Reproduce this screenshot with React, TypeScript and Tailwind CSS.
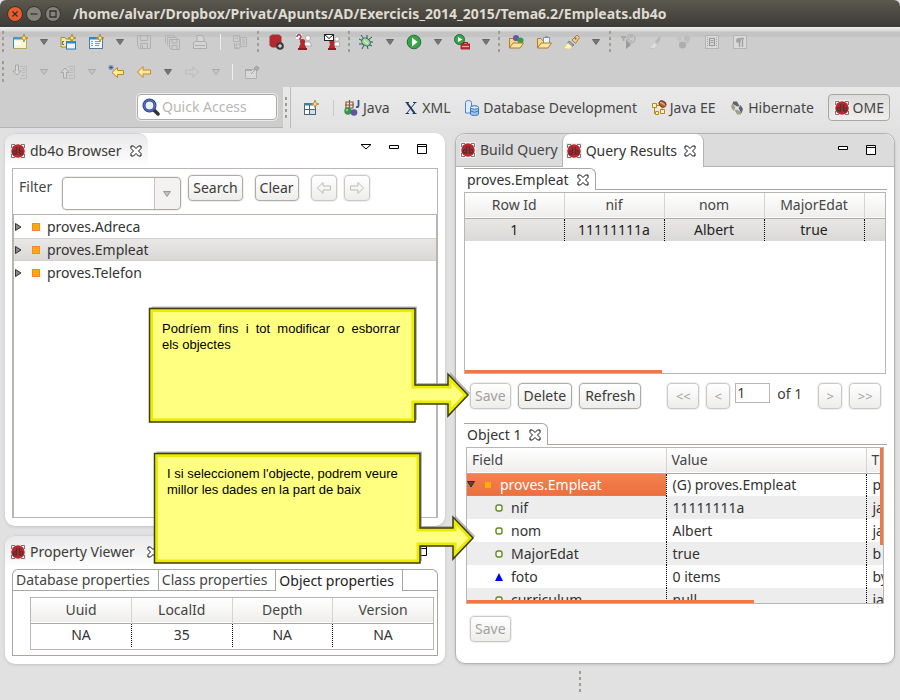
import React from 'react';
import clsx from 'clsx';

type Kids = { children?: React.ReactNode; className?: string };

/* ---------- icons ---------- */

const Svg = ({ children, className }: Kids) => (
  <svg viewBox="0 0 16 16" className={clsx('w-4 h-4 shrink-0', className)} fill="none" aria-hidden="true">
    {children}
  </svg>
);

const Db4oIcon = () => (
  <Svg>
    <rect x=".5" y=".5" width="15" height="15" fill="#fff" stroke="#eee" />
    <path d="M1.500 5V1.500H5M11 1.500h3.500V5M14.500 11v3.500H11M5 14.500H1.500V11" stroke="#777" />
    <circle cx="8" cy="8" r="6.800" fill="#b8282e" />
    <path d="M6.500 4v7.500M9.500 4v7.500" stroke="#553030" strokeWidth="1.400" />
    <circle cx="4.800" cy="9.300" r="1.700" stroke="#553030" strokeWidth="1.300" />
    <circle cx="11.200" cy="9.300" r="1.700" stroke="#553030" strokeWidth="1.300" />
  </Svg>
);

const CloseIcon = () => (
  <svg viewBox="0 0 12 12" className="w-3 h-3" fill="none" aria-hidden="true">
    <path d="M1 1h2.500L6 3.500 8.500 1H11v2.500L8.500 6 11 8.500V11H8.500L6 8.500 3.500 11H1V8.500L3.500 6 1 3.500z" fill="#fff" stroke="#111" />
  </svg>
);

const Spark = ({ x = 12, y = 4 }) => (
  <g transform={`translate(${x} ${y})`}>
    <path d="M0-4L1-1 4 0 1 1 0 4-1 1-4 0-1-1z" fill="#f7e08a" stroke="#a8841c" strokeWidth=".8" />
  </g>
);

const NewIcon = () => (
  <Svg>
    <rect x="1.500" y="3.500" width="13" height="11" fill="#f8f5d4" stroke="#b9a766" />
    <path d="M1.500 14V3.500H11" stroke="#3f86b8" />
    <path d="M1 3h10v2.500H1z" fill="#3f9ad0" />
    <path d="M3 7h6v4H3z" fill="#fff" />
    <Spark />
  </Svg>
);

const NewProjectIcon = () => (
  <Svg>
    <path d="M1 3.500h4l1 1.500h5v8H1z" fill="#fbe7a4" stroke="#b08a2c" />
    <path d="M4 7.500H2.500v3H4" stroke="#2d79a8" />
    <rect x="6.500" y="7.500" width="9" height="7.500" fill="#eef6fc" stroke="#2d79a8" />
    <path d="M6 7h10v2.500H6z" fill="#3189c4" />
    <Spark />
  </Svg>
);

const NewWizardIcon = () => (
  <Svg>
    <rect x="1.500" y="3.500" width="13" height="11" fill="#f7fafc" stroke="#54799b" />
    <path d="M1 3h10v2.500H1z" fill="#3189c4" />
    <path d="M3 7.500h2M3 9.500h2M3 11.500h2M7 7.500h5M7 9.500h5M7 11.500h4" stroke="#7d9bb8" />
    <Spark />
  </Svg>
);

const SaveIcon = () => (
  <Svg>
    <path d="M1.500 1.500h13v13h-11l-2-2zM4.500 1.500v5h7v-5M4.500 14.500v-5h7v5M6.500 11v3" stroke="#b0b0b0" />
  </Svg>
);

const SaveAllIcon = () => (
  <Svg>
    <path d="M1.500 9.500v-8h9v2M3.500 11.500v-8h9v2" stroke="#b4b4b4" />
    <path d="M5.500 5.500h10v10h-8l-2-2zM8 5.500v3.500h5V5.500M8 15v-3.500h5V15" stroke="#b0b0b0" />
  </Svg>
);

const PrintIcon = () => (
  <Svg>
    <path d="M5 8V1.500h5L12 4v4M1.500 8.500l2-1h9l2 1v6h-13zM3 11.500h10" fill="#d4d4d4" stroke="#adadad" />
  </Svg>
);

const CompareIcon = () => (
  <Svg>
    <path d="M1.500 1.500h6v6h-6zM8.500 3.500h6v9h-6zM2.500 9v5.500H7M3 4h3M10 6h3M10 8h3M10 10h3M4 10h4v4H4z" stroke="#b3b3b3" />
  </Svg>
);

const StopAddIcon = () => (
  <Svg>
    <path d="M4 .5h7l2.500 2v9l-2.500 2H4l-2.500-2v-9z" fill="#b02a30" />
    <circle cx="12" cy="12" r="3.800" fill="#3a3a3a" />
    <path d="M10 12h4M12 10v4" stroke="#fff" />
  </Svg>
);

const ConnectIcon = () => (
  <Svg>
    <circle cx="12" cy="4" r="2.500" fill="#fff" stroke="#999" strokeWidth=".7" />
    <path d="M8 12l1-4h5l1.500 4z" fill="#fff" stroke="#999" strokeWidth=".7" />
    <path d="M0 0h6v5H0z" fill="#fff" />
    <path d="M1 3a2 2 0 1 1 3 1.500V6" stroke="#b8325c" strokeWidth="1.500" />
    <circle cx="6.500" cy="7.500" r="2.600" fill="#b3282d" />
    <path d="M5 9h3l2 4v2H3v-2z" fill="#b3282d" />
    <path d="M2 15h9" stroke="#8c1c20" strokeWidth="2" />
  </Svg>
);

const MailUserIcon = () => (
  <Svg>
    <circle cx="13" cy="5" r="2.200" fill="#fff" stroke="#999" strokeWidth=".7" />
    <path d="M10 12l1-4h4l1 4z" fill="#fff" stroke="#999" strokeWidth=".7" />
    <circle cx="8" cy="8" r="2.600" fill="#b3282d" />
    <path d="M6.500 9h3l1.500 4v2H5v-2z" fill="#b3282d" />
    <path d="M4 15h8" stroke="#8c1c20" strokeWidth="2" />
    <rect x=".5" y=".5" width="9" height="6" fill="#fff" stroke="#222" />
    <path d="M1 1l4 3.500L9 1" stroke="#222" />
  </Svg>
);

const BugIcon = () => (
  <Svg>
    <path d="M3 1l3 4M1 5l4 2M1 10h4M4 15l2-4M9 1v4M14 3l-4 3M15 8h-4M14 12l-4-2M10 15l-1-4" stroke="#28565c" />
    <ellipse cx="8" cy="8" rx="4.600" ry="3.600" transform="rotate(35 8 8)" fill="#a5d7a0" stroke="#2a6b5f" />
    <path d="M6 6.500l4 3.500" stroke="#e6f7d0" />
  </Svg>
);

const RunIcon = () => (
  <Svg>
    <circle cx="8" cy="8" r="6.800" fill="#3aa34a" stroke="#1e7433" />
    <path d="M6 3.500l5.500 4.500L6 12.500z" fill="#fff" />
  </Svg>
);

const RunExternalIcon = () => (
  <Svg>
    <circle cx="5.500" cy="5.500" r="5" fill="#3aa34a" stroke="#1e7433" />
    <path d="M4 3l4.500 2.500L4 8z" fill="#fff" />
    <path d="M7 10h9v5H7z" fill="#cf2f35" stroke="#8e1b20" strokeWidth=".8" />
    <path d="M9.500 10V8.500h4V10" stroke="#8e1b20" />
    <path d="M8 12.500h7" stroke="#f3a5a5" />
  </Svg>
);

const FolderIcon = ({ children }: Kids) => (
  <Svg>
    <path d="M1.500 14V4.500H5l1.500 2h7V9" fill="#f5d88c" stroke="#b07f25" />
    {children}
    <path d="M1.500 14L5 9h10.500L12 14z" fill="#fbe5a5" stroke="#b07f25" />
  </Svg>
);

const OpenTypeIcon = () => (
  <FolderIcon>
    <circle cx="8" cy="4" r="3" fill="#6757a8" />
    <circle cx="12.500" cy="6.500" r="3" fill="#3a9a50" />
  </FolderIcon>
);

const OpenTaskIcon = () => (
  <FolderIcon>
    <path d="M7.500 3.500h6v6h-6zM9.500 3.500v-1h2v1" fill="#eef4fa" stroke="#7a93b0" />
  </FolderIcon>
);

const TorchIcon = () => (
  <Svg>
    <path d="M8 6l5-5 2.500 2.500-4 6z" fill="#f3c882" stroke="#b0813a" />
    <path d="M5 7l5 4-2 1.500L3.500 9z" fill="#9aa0b5" stroke="#6a6f85" strokeWidth=".7" />
    <path d="M4 9l4 3.500L6 15l-6-.500L2 11z" fill="#fff6b8" stroke="#dcc668" strokeWidth=".5" />
    <circle cx="11.500" cy="4.500" r="1" fill="#4a6fa5" />
  </Svg>
);

const FadedClassIcon = () => (
  <Svg>
    <path d="M1 3h5M3.500 3v4" stroke="#aaa" strokeWidth="2" />
    <circle cx="11" cy="5" r="4" stroke="#b0b0b0" strokeWidth="1.400" />
    <path d="M12.500 3.800a2 2 0 1 0 0 2.500" stroke="#aaa" />
    <path d="M6 6l5 5-5 4z" fill="#999" />
  </Svg>
);

const FadedBrushIcon = () => (
  <Svg>
    <path d="M1 14l5-6 4 3-4 4z" fill="#dcdcdc" stroke="#bbb" strokeWidth=".7" />
    <path d="M7 7l6-6-1 6-3 3z" fill="#b9b9b9" />
  </Svg>
);

const FadedBallsIcon = () => (
  <Svg>
    <circle cx="3.500" cy="4.500" r="2.500" fill="#c3c3c3" />
    <circle cx="11" cy="4.500" r="3" fill="#bcbcbc" />
    <circle cx="6.500" cy="11" r="3.600" fill="#aeaeae" />
    <path d="M9 9h3V6" stroke="#bbb" />
  </Svg>
);

const FadedBlockIcon = () => (
  <Svg>
    <rect x="1.500" y="1.500" width="13" height="13" fill="#d8d8d8" stroke="#b5b5b5" />
    <rect x="5.500" y="4.500" width="5" height="7" stroke="#999" />
    <path d="M3.500 3v10M12.500 3v10" stroke="#aaa" strokeDasharray="1 1" />
    <path d="M6.500 6.500h3M6.500 8.500h3" stroke="#999" />
  </Svg>
);

const FadedPilcrowIcon = () => (
  <Svg>
    <rect x="1.500" y="1.500" width="13" height="13" fill="#dadada" stroke="#b5b5b5" />
    <path d="M8 4.500h4M7.500 4v9M10.500 4v9" stroke="#a5a5a5" strokeWidth="1.500" />
    <circle cx="6.500" cy="6.500" r="2.500" fill="#a5a5a5" />
  </Svg>
);

const StepIcon = ({ up = false }) => (
  <Svg>
    <path d="M8 2.500h6.500v12H8M10 4.500h3M10 6.500h3M10 8.500h3M9 11.500h4" stroke="#bbb" />
    {up
      ? <path d="M5 4L1 8.500h2.500V14h3V8.500H9z" fill="#d6d6d6" stroke="#a8a8a8" />
      : <path d="M5 11L1 7h2.500V1h3v6H9z" fill="#d6d6d6" stroke="#a8a8a8" />}
  </Svg>
);

const ArrowIcon = ({ right = false, faded = false, star = false }) => (
  <Svg>
    <g transform={right ? 'translate(16 0) scale(-1 1)' : undefined}>
      <path
        d={star ? 'M4 8.500L9.500 3.500v3h6v4h-6v3z' : 'M1.500 8l5.500-5.500v3.500h7.500v4H7v3.500z'}
        fill={faded ? 'transparent' : '#ffe9a0'}
        stroke={faded ? '#bdbbb9' : '#c08a1e'}
      />
    </g>
    {star && <path d="M3 1v5M.5 3.500h5M1 1.500l4 4M5 1.500l-4 4" stroke="#24508c" strokeWidth=".8" />}
  </Svg>
);

const PinIcon = () => (
  <Svg>
    <path d="M1.500 5.500h11v9h-11z" fill="#d8d8d8" stroke="#b0b0b0" />
    <path d="M1 5h7v2H1z" fill="#aaa" />
    <path d="M7 10l4-4M10 4l3 3 2-3-2-2z" fill="#aaa" stroke="#a2a2a2" />
  </Svg>
);

const SearchIcon = () => (
  <svg viewBox="0 0 18 18" className="w-[18px] h-[18px] shrink-0" fill="none" aria-hidden="true">
    <path d="M12 12l4 4" stroke="#333" strokeWidth="3.500" strokeLinecap="round" />
    <circle cx="7.500" cy="7.500" r="5.500" fill="#e9eef8" stroke="#24418f" strokeWidth="3" />
    <circle cx="7.500" cy="7.500" r="5.500" stroke="#6f86c8" strokeWidth="1" />
  </svg>
);

const OpenPerspectiveIcon = () => (
  <Svg>
    <rect x="1.500" y="3.500" width="11" height="11" fill="#fff" stroke="#4d6272" />
    <path d="M1 3h9v2.500H1z" fill="#3b7fae" />
    <path d="M6.500 5v9.500M2 9.500h10" stroke="#4d6272" />
    <path d="M7 10h5v4H7z" fill="#cfe0ea" />
    <Spark />
  </Svg>
);

const JavaIcon = () => (
  <Svg>
    <path d="M2 2h7v6H2zM5.500 0v8M1 5h9" stroke="#8b5a3c" strokeWidth="1.200" />
    <path d="M14.500 0v5.500q0 2-2.500 1.500" stroke="#2a5b94" strokeWidth="1.800" />
    <circle cx="4" cy="11" r="3.700" fill="#36954b" />
    <circle cx="10" cy="12.500" r="3.300" fill="#6153a3" />
    <circle cx="3" cy="10" r="1.200" fill="#86cd8f" />
  </Svg>
);

const XmlIcon = () => (
  <Svg>
    <path d="M4 3l7.500 10" stroke="#1d3a66" strokeWidth="2" />
    <path d="M12 3L4 13M2.500 2.500H6M10 2.500h3.500M2.500 13.500H6M9.500 13.500h4" stroke="#1d3a66" />
  </Svg>
);

const DatabaseIcon = () => (
  <Svg>
    <path d="M1.500 2.500q0-2 3-2t3 2V13h-6z" fill="#dcecf9" stroke="#4a88c4" />
    <path d="M6.500 7.500q0-1.500 4-1.500t4 1.500V14q0 1.500-4 1.500T6.500 14z" fill="#9cc6ee" stroke="#3a78b8" />
    <ellipse cx="10.500" cy="7.500" rx="4" ry="1.700" fill="#e2f0fb" stroke="#3a78b8" />
    <path d="M6.500 11q4 2.500 8 0" stroke="#3a78b8" />
  </Svg>
);

const JavaEeIcon = () => (
  <Svg>
    <path d="M1.500 3.500h4v4h-4zM3.500 7.500v6H5M5.500 5.500H11v4M9.500 9.500h4v4h-4zM4.500 11.500h3v3h-3z" fill="#fff3bf" stroke="#b98a14" />
    <ellipse cx="11.500" cy="4" rx="3.600" ry="2.800" transform="rotate(35 11.500 4)" fill="#b9612f" stroke="#6b2f12" />
    <path d="M9 2.500q3 0 5 3" stroke="#f5d3b5" />
  </Svg>
);

const HibernateIcon = () => (
  <Svg>
    <path d="M4 1.500h4L10.500 6 8 6.500 4 4z" fill="#59666b" />
    <path d="M3.500 2.500L6.500 8l-2 3L2 7z" fill="#a39f87" />
    <path d="M12 14.500H8L5.500 10 8 9.500l4 2.500z" fill="#a39f87" />
    <path d="M12.500 13.500L9.500 8l2-3L14 9z" fill="#59666b" />
  </Svg>
);

/* ---------- small widgets ---------- */

const Tool = ({ label, children, disabled }: Kids & { label: string; disabled?: boolean }) => (
  <button type="button" aria-label={label} disabled={disabled} className="w-7 h-6 flex items-center justify-center shrink-0">
    {children}
  </button>
);

const Drop = ({ faded = false }) => (
  <button type="button" aria-label="More" disabled={faded} className="w-5 h-6 flex items-center justify-center shrink-0">
    <svg viewBox="0 0 8 6" className="w-2 h-1.5" aria-hidden="true">
      <path d="M.5.5h7L4 5.500z" fill={faded ? '#c6c6c6' : '#777'} stroke={faded ? '#aaa' : '#666'} />
    </svg>
  </button>
);

const Grip = ({ className = 'w-1.5' }: Kids) => (
  <span className={clsx('flex justify-center shrink-0', className)}>
    <span className="h-[22px] w-0.5 bg-[repeating-linear-gradient(to_bottom,#a09c90_0px,#a09c90_3px,transparent_3px,transparent_6px)]" />
  </span>
);

const Separator = () => (
  <span className="w-3 flex justify-center shrink-0">
    <span className="w-px h-4 bg-[#efefef]" />
  </span>
);

const Btn = ({ children, className, disabled, label }: Kids & { disabled?: boolean; label?: string }) => (
  <button
    type="button"
    aria-label={label}
    disabled={disabled}
    className={clsx(
      'h-[26px] flex items-center justify-center shrink-0 rounded border bg-linear-to-b from-white to-[#ededec] shadow-[0_0_0_1px_#f0efee]',
      disabled ? 'border-[#cbc8c5] text-[#a3a19e]' : 'border-[#aeaaa6] text-[#3c3b37]',
      className
    )}
  >
    {children}
  </button>
);

const WindowControls = ({ menu = false }) => (
  <div className="ml-auto flex items-start gap-[18px] pr-[18px] pt-[11px]">
    {menu && (
      <button type="button" aria-label="View menu">
        <svg viewBox="0 0 10 10" className="w-2.5 h-2.5" fill="#fff" stroke="#000" aria-hidden="true"><path d="M0 .5h10L5 5z" /></svg>
      </button>
    )}
    <button type="button" aria-label="Minimize">
      <svg viewBox="0 0 10 10" className="w-2.5 h-2.5" fill="#fff" stroke="#000" aria-hidden="true"><path d="M.5 1.500h9v3h-9z" /></svg>
    </button>
    <button type="button" aria-label="Maximize">
      <svg viewBox="0 0 10 10" className="w-2.5 h-2.5" fill="#fff" stroke="#000" aria-hidden="true"><path d="M.5.5h9v9h-9zM0 2.500h10" /></svg>
    </button>
  </div>
);

const Perspective = ({ icon, children }: Kids & { icon: React.ReactNode }) => (
  <button type="button" className="flex items-center gap-[3px] whitespace-nowrap">
    {icon}
    {children}
  </button>
);

const Close = () => (
  <button type="button" aria-label="Close" className="flex"><CloseIcon /></button>
);

const TitleDot = ({ label, className, children }: Kids & { label: string }) => (
  <button type="button" aria-label={label} className={clsx('w-4 h-4 rounded-full border border-[#33322e] flex items-center justify-center', className)}>
    <svg viewBox="0 0 10 10" className="w-2.5 h-2.5" fill="none" stroke="#33322e" strokeWidth="1.300" aria-hidden="true">{children}</svg>
  </button>
);

/* ---------- toolbars ---------- */

const TitleBar = () => (
  <header className="h-[27px] flex items-center pl-[7px] rounded-t-md bg-linear-to-b from-[#5b584e] to-[#3d3b36] text-[#dfdbd2]">
    <div className="flex gap-[3px]">
      <TitleDot label="Close window" className="bg-[#ea5b2e]"><path d="M2.500 2.500l5 5M7.500 2.500l-5 5" /></TitleDot>
      <TitleDot label="Minimize window" className="bg-[#85827a]"><path d="M1.500 5h7" /></TitleDot>
      <TitleDot label="Maximize window" className="bg-[#85827a]"><path d="M2 2h6v6H2z" /></TitleDot>
    </div>
    <h1 className="ml-3 text-[14px] font-bold whitespace-nowrap">
      /home/alvar/Dropbox/Privat/Apunts/AD/Exercicis_2014_2015/Tema6.2/Empleats.db4o
    </h1>
  </header>
);

const Toolbars = () => (
  <div className="bg-[linear-gradient(to_bottom,#f0f0f0_0px,#d8d8d8_4px,#c4c4c4_5px,#c4c4c4_10px,#cdcdcd_10px)]">
    <div className="h-[30px] flex items-center">
      <Grip />
      <Tool label="New"><NewIcon /></Tool>
      <Drop />
      <Tool label="New project"><NewProjectIcon /></Tool>
      <Tool label="New wizard"><NewWizardIcon /></Tool>
      <Drop />
      <Tool label="Save" disabled><SaveIcon /></Tool>
      <Tool label="Save all" disabled><SaveAllIcon /></Tool>
      <Tool label="Print" disabled><PrintIcon /></Tool>
      <Separator />
      <Tool label="Compare" disabled><CompareIcon /></Tool>
      <Grip className="w-2" />
      <Tool label="Add database"><StopAddIcon /></Tool>
      <Tool label="Connect"><ConnectIcon /></Tool>
      <Tool label="Contact"><MailUserIcon /></Tool>
      <Grip />
      <Tool label="Debug"><BugIcon /></Tool>
      <Drop />
      <Tool label="Run"><RunIcon /></Tool>
      <Drop />
      <Tool label="External tools"><RunExternalIcon /></Tool>
      <Drop />
      <Grip />
      <Tool label="Open type"><OpenTypeIcon /></Tool>
      <Tool label="Open task"><OpenTaskIcon /></Tool>
      <Tool label="Search"><TorchIcon /></Tool>
      <Drop />
      <Grip className="w-2" />
      <Tool label="Run class" disabled><FadedClassIcon /></Tool>
      <Tool label="Highlight" disabled><FadedBrushIcon /></Tool>
      <Tool label="Group" disabled><FadedBallsIcon /></Tool>
      <Tool label="Block selection" disabled><FadedBlockIcon /></Tool>
      <Tool label="Show whitespace" disabled><FadedPilcrowIcon /></Tool>
    </div>
    <div className="h-[30px] flex items-center">
      <Grip />
      <Tool label="Next annotation" disabled><StepIcon /></Tool>
      <Drop faded />
      <Tool label="Previous annotation" disabled><StepIcon up /></Tool>
      <Drop faded />
      <Tool label="Last edit"><ArrowIcon star /></Tool>
      <Tool label="Back"><ArrowIcon /></Tool>
      <Drop />
      <Tool label="Forward" disabled><ArrowIcon right faded /></Tool>
      <Drop faded />
      <Separator />
      <Tool label="Pin" disabled><PinIcon /></Tool>
    </div>
  </div>
);

const PerspectiveBar = () => (
  <div className="h-[41px] flex bg-linear-to-b from-[#e9e9e9] to-[#e2e2e2]">
    <div className="w-[283px] shrink-0 bg-[#cdcdcd] border-b border-[#b4b4b4] flex items-center justify-end pr-1.5">
      <label className="w-[140px] h-[26px] flex items-center gap-0.5 pl-1 rounded border border-[#aeaaa6] bg-white shadow-[0_0_0_1px_#ebebeb]">
        <SearchIcon />
        <input type="text" aria-label="Quick Access" placeholder="Quick Access" className="w-full min-w-0 bg-transparent outline-none placeholder:text-[#b9b7b4]" />
      </label>
    </div>
    <div className="flex items-center border-r border-[#bbb] pr-px">
      <Grip />
    </div>
    <nav className="grow flex items-center pl-3 pr-2.5 text-[#454545]">
      <button type="button" aria-label="Open perspective"><OpenPerspectiveIcon /></button>
      <span className="w-px h-4 bg-[#c9c9c9] ml-3.5 mr-2.5" />
      <div className="grow flex items-center justify-between">
        <Perspective icon={<JavaIcon />}>Java</Perspective>
        <Perspective icon={<XmlIcon />}>XML</Perspective>
        <Perspective icon={<DatabaseIcon />}>Database Development</Perspective>
        <Perspective icon={<JavaEeIcon />}>Java EE</Perspective>
        <Perspective icon={<HibernateIcon />}>Hibernate</Perspective>
        <button type="button" className="h-[27px] px-[5px] flex items-center gap-[3px] rounded border border-[#aaa6a2] bg-linear-to-b from-[#dedddc] to-[#efeeed]">
          <Db4oIcon />
          OME
        </button>
      </div>
    </nav>
  </div>
);

/* ---------- left column ---------- */

const classes = ['proves.Adreca', 'proves.Empleat', 'proves.Telefon'];

const BrowserPanel = () => (
  <section className="grow flex flex-col rounded-[10px] bg-white shadow-[0_1px_3px_#c4c4c4]">
    <div className="h-[34px] flex">
      <h2 className="flex items-center gap-1 pl-[5px] pr-1.5 rounded-t-[10px] border-t border-[#d3d3dc] bg-linear-to-b from-[#e9e9e9] to-white">
        <Db4oIcon />
        db4o Browser
        <span className="ml-1"><Close /></span>
      </h2>
      <WindowControls menu />
    </div>
    <div className="grow flex flex-col mx-[7px] mt-px mb-2 border border-[#b9b5b0]">
      <div className="flex items-start gap-3 px-1.5 pt-[6px] pb-1">
        <label htmlFor="filter" className="pt-0.5 text-[#454545]">Filter</label>
        <div className="relative flex mt-0.5 -ml-0.5 mr-[-5px]">
          <select id="filter" className="w-[119px] h-[33px] appearance-none rounded border border-[#aeaaa6] bg-[linear-gradient(to_right,#fff_91px,#c6c3c0_91px,#c6c3c0_92px,#f3f2f1_92px)] shadow-[0_0_0_1px_#f0efee]" />
          <svg viewBox="0 0 8 6" className="absolute right-2.5 top-3.5 w-2 h-1.5 pointer-events-none" aria-hidden="true">
            <path d="M.5.5h7L4 5.500z" fill="#c0c0c0" stroke="#999" />
          </svg>
        </div>
        <Btn className="px-1">Search</Btn>
        <Btn className="px-1">Clear</Btn>
        <div className="flex gap-[7px]">
          <Btn disabled label="Previous" className="w-[26px]"><ArrowIcon faded /></Btn>
          <Btn disabled label="Next" className="w-[26px]"><ArrowIcon right faded /></Btn>
        </div>
      </div>
      <ul className="grow border-t border-l border-r border-[#b9b5b0] text-[#333]">
        {classes.map((name, i) => (
          <li
            key={name}
            className={clsx(
              'h-[23px] flex items-center pl-px border-y',
              i === 1 ? 'bg-linear-to-b from-[#e9e8e7] to-[#dbd9d7] border-[#d3d0ce]' : 'border-transparent'
            )}
          >
            <svg viewBox="0 0 7 8" className="w-[7px] h-2" aria-hidden="true"><path d="M.5.5L6 4 .5 7.500z" fill="#888" stroke="#333" /></svg>
            <span className="w-2 h-2 ml-2.5 mr-[7px] bg-[#ffab00] border border-[#ff7f3f]" />
            {name}
          </li>
        ))}
      </ul>
    </div>
  </section>
);

const properties = [
  { name: 'Uuid', value: 'NA' },
  { name: 'LocalId', value: '35' },
  { name: 'Depth', value: 'NA' },
  { name: 'Version', value: 'NA' },
];

const PropertyPanel = () => (
  <section className="rounded-[10px] bg-white shadow-[0_1px_3px_#c4c4c4]">
    <div className="h-[33px] flex">
      <h2 className="flex items-center gap-1 pl-[5px] pr-1.5 rounded-t-[10px] border-t border-[#d3d3dc] bg-linear-to-b from-[#e9e9e9] to-white">
        <Db4oIcon />
        Property Viewer
        <span className="ml-2"><Close /></span>
      </h2>
      <WindowControls menu />
    </div>
    <div className="mx-[7px] mt-px pb-2">
      <div className="flex border border-b-0 border-[#a9a6a2] rounded-t-md whitespace-nowrap">
        <button type="button" className="h-[21px] pl-[3px] pr-2 border-b border-r border-[#a9a6a2] text-[#454545]">Database properties</button>
        <button type="button" className="h-[21px] pl-[3px] pr-2 border-b border-r border-[#a9a6a2] text-[#454545]">Class properties</button>
        <button type="button" className="h-[21px] pl-[3px] pr-2 border-r border-[#a9a6a2] text-[#222]">Object properties</button>
        <span className="grow border-b border-[#a9a6a2]" />
      </div>
      <div className="border border-t-0 border-[#a9a6a2] pt-1.5 pl-[17px] pr-[3px] pb-[5px]">
        <div className="border border-[#b9b5b0] pb-0.5">
          <table className="w-full table-fixed border-collapse text-center">
            <thead>
              <tr className="h-[25px] bg-linear-to-b from-white to-[#efeeed] border-b border-[#aeaaa6]">
                {properties.map((p) => (
                  <th key={p.name} className="p-0 font-normal text-[#454545] border-l border-[#d6d3d0] first:border-l-0">{p.name}</th>
                ))}
              </tr>
            </thead>
            <tbody>
              <tr className="h-6">
                {properties.map((p) => (
                  <td key={p.name} className="p-0 text-[#333] border-l border-dotted border-black first:border-l-0">{p.value}</td>
                ))}
              </tr>
            </tbody>
          </table>
        </div>
      </div>
    </div>
  </section>
);

/* ---------- right column ---------- */

const InnerTab = ({ children }: Kids) => (
  <div className="h-[22px] flex">
    <h3 className="flex items-center gap-2 pl-[3px] pr-1.5 border-t border-r border-[#a9a6a2] rounded-tr-md text-[#333]">
      {children}
      <Close />
    </h3>
    <span className="grow border-b border-[#a9a6a2]" />
  </div>
);

const resultColumns = ['Row Id', 'nif', 'nom', 'MajorEdat', ''];
const resultRow = ['1', '11111111a', 'Albert', 'true', ''];

const ResultsTable = () => (
  <div className="relative h-[182px] mt-0.5 mr-2 ml-px border border-[#b9b5b0] overflow-hidden">
    <table className="w-full table-fixed border-collapse text-center">
      <colgroup>
        <col className="w-[99px]" />
        <col className="w-[100px]" />
        <col className="w-[100px]" />
        <col className="w-[100px]" />
        <col />
      </colgroup>
      <thead>
        <tr className="h-[25px] bg-linear-to-b from-white to-[#efeeed] border-b border-[#aeaaa6]">
          {resultColumns.map((c) => (
            <th key={c} className="p-0 font-normal text-[#454545] border-l border-[#d6d3d0] first:border-l-0">{c}</th>
          ))}
        </tr>
      </thead>
      <tbody>
        <tr className="h-[23px] bg-linear-to-b from-[#e9e8e7] to-[#dbd9d7]">
          {resultRow.map((v, i) => (
            <td key={i} className="p-0 text-[#222] border-l border-dotted border-black first:border-l-0">{v}</td>
          ))}
        </tr>
      </tbody>
    </table>
    <span className="absolute left-0 bottom-0 h-[3px] w-[47%] bg-[#f07746]" />
  </div>
);

const fields = [
  { name: 'nif', value: '11111111a', type: 'ja' },
  { name: 'nom', value: 'Albert', type: 'ja' },
  { name: 'MajorEdat', value: 'true', type: 'b' },
  { name: 'foto', value: '0 items', type: 'by', array: true },
  { name: 'curriculum', value: 'null', type: 'ja' },
];

const ObjectTable = () => (
  <div className="relative h-[157px] mt-0.5 mr-2.5 ml-[3px] border border-[#b9b5b0] overflow-hidden">
    <table className="w-full table-fixed border-collapse text-left">
      <colgroup>
        <col className="w-[199px]" />
        <col className="w-[200px]" />
        <col />
      </colgroup>
      <thead>
        <tr className="h-[25px] bg-linear-to-b from-white to-[#efeeed] border-b border-[#aeaaa6]">
          <th className="py-0 pl-[5px] font-normal text-[#454545]">Field</th>
          <th className="py-0 pl-[5px] font-normal text-[#454545] border-l border-[#d6d3d0]">Value</th>
          <th className="py-0 pl-[5px] font-normal text-[#454545] border-l border-[#d6d3d0]">T</th>
        </tr>
      </thead>
      <tbody className="text-[#333]">
        <tr className="h-[23px]">
          <td className="p-0 bg-linear-to-b from-[#f4814f] to-[#eb6f3e] text-white">
            <span className="flex items-center">
              <svg viewBox="0 0 8 7" className="w-2 h-[7px]" aria-hidden="true"><path d="M.5.5h7L4 6z" fill="#6b3d28" stroke="#333" /></svg>
              <span className="w-1.5 h-1.5 ml-2.5 mr-[9px] bg-[#ffab00]" />
              proves.Empleat
            </span>
          </td>
          <td className="py-0 pl-1.5 border-l border-dotted border-black">(G) proves.Empleat</td>
          <td className="py-0 pl-1.5 border-l border-dotted border-black">p</td>
        </tr>
        {fields.map((f) => (
          <tr key={f.name} className="h-[23px] odd:bg-white even:bg-[#ededed]">
            <td className="p-0">
              <span className="flex items-center gap-2 pl-7">
                {f.array
                  ? <svg viewBox="0 0 8 8" className="w-2 h-2" aria-hidden="true"><path d="M4 0l4 8H0z" fill="#0000f5" /></svg>
                  : <svg viewBox="0 0 8 8" className="w-2 h-2" aria-hidden="true"><rect x="1" y="1" width="6" height="6" rx="2" fill="#fff" stroke="#5e8a1e" strokeWidth="1.400" /></svg>}
                {f.name}
              </span>
            </td>
            <td className="py-0 pl-1.5 border-l border-dotted border-black">{f.value}</td>
            <td className="py-0 pl-1.5 border-l border-dotted border-black">{f.type}</td>
          </tr>
        ))}
      </tbody>
    </table>
    <span className="absolute left-0 bottom-0 h-[3px] w-[69%] bg-[#f07746]" />
    <span className="absolute right-0 top-0 w-[3px] h-[97px] bg-[#f07746]" />
  </div>
);

const QueryPanel = () => (
  <section className="rounded-[10px] bg-white border border-[#b4b4b4] shadow-[0_1px_3px_#c4c4c4]">
    <div className="h-[33px] flex rounded-t-[10px] bg-[#dcdcdc]">
      <h2 className="flex items-center gap-1 pl-1 pr-1 text-[#454545] border-b border-[#b4b4b4]">
        <Db4oIcon />
        Build Query
      </h2>
      <h2 className="flex items-center gap-1 pl-[3px] pr-[7px] bg-white text-[#333] border-x border-[#b4b4b4] rounded-t-lg">
        <Db4oIcon />
        Query Results
        <span className="ml-[3px]"><Close /></span>
      </h2>
      <div className="grow flex border-b border-[#b4b4b4] rounded-tr-[10px]">
        <WindowControls />
      </div>
    </div>
    <div className="pl-2 pr-[7px] pt-px">
      <InnerTab>proves.Empleat</InnerTab>
    </div>
    <div className="pl-[7px]">
      <ResultsTable />
    </div>
    <div className="flex items-start pl-3.5 pt-[9px] gap-[7px]">
      <Btn disabled className="px-1">Save</Btn>
      <Btn className="px-[5px]">Delete</Btn>
      <Btn className="px-[5px]">Refresh</Btn>
      <Btn disabled className="w-8 ml-[19px] text-[13px]">&lt;&lt;</Btn>
      <Btn disabled className="w-6 text-[13px]">&lt;</Btn>
      <input type="text" aria-label="Page" defaultValue="1" className="w-[35px] h-5 -ml-0.5 pl-px border border-[#b9b5b0] outline-none" />
      <span className="mt-px">of 1</span>
      <Btn disabled className="w-6 ml-[9px] text-[13px]">&gt;</Btn>
      <Btn disabled className="w-8 text-[13px]">&gt;&gt;</Btn>
    </div>
    <div className="pl-2 pr-[7px] pt-3.5">
      <InnerTab>Object 1</InnerTab>
    </div>
    <div className="pl-[7px]">
      <ObjectTable />
    </div>
    <div className="flex pl-3.5 pt-3 pb-[21px]">
      <Btn disabled className="px-1">Save</Btn>
    </div>
  </section>
);

/* ---------- callouts ---------- */

const Callout = ({ children, className, tall = false }: Kids & { tall?: boolean }) => {
  const shape = tall
    ? 'M2.500 3.500H268V80H301V69L321 90 301 111V99H268V117H2.500z'
    : 'M2.500 3.500H268V78H301V67L321 88 301 109V96H268V113H2.500z';
  return (
    <aside className={clsx('absolute w-[324px] h-[122px]', className)}>
      <svg viewBox="0 0 324 122" className="absolute inset-0 w-full h-full" fill="none" aria-hidden="true">
        <path d={shape} transform="translate(2 -2)" fill="#8a8a8a" fillOpacity=".6" />
        <path d={shape} fill="#ffff80" stroke="#ebeb00" strokeWidth="7" clipPath={tall ? 'url(#tall)' : 'url(#short)'} />
        <path d={shape} stroke="#3c3c14" strokeWidth="1.500" />
        <clipPath id={tall ? 'tall' : 'short'}><path d={shape} /></clipPath>
      </svg>
      <p className="relative w-[253px] pl-[15px] pt-4 text-[13px] leading-4 text-black font-['Liberation_Sans',Arial,sans-serif]">
        {children}
      </p>
    </aside>
  );
};

const App: React.FC = () => (
  <div className="relative min-h-screen flex flex-col bg-[#e1e1e1] text-[14px] leading-5 text-[#3c3b37] font-['Noto_Sans','Open_Sans',sans-serif] overflow-hidden">
    <TitleBar />
    <Toolbars />
    <PerspectiveBar />
    <main className="grid grid-cols-2 gap-2.5 px-[5px] pt-[5px]">
      <div className="min-w-0 flex flex-col gap-[9px]">
        <BrowserPanel />
        <PropertyPanel />
      </div>
      <div className="min-w-0">
        <QueryPanel />
      </div>
    </main>
    <footer className="grow flex items-center pl-[577px]">
      <Grip />
    </footer>

    <Callout tall className="left-[147px] top-[305px]">
      <span className="block [text-align-last:justify]">Podríem fins i tot modificar o esborrar</span>
      els objectes
    </Callout>
    <Callout className="left-[152px] top-[450px]">
      <span className="whitespace-nowrap">I si seleccionem l'objecte, podrem veure</span>
      <br />
      millor les dades en la part de baix
    </Callout>
  </div>
);

export default App;
